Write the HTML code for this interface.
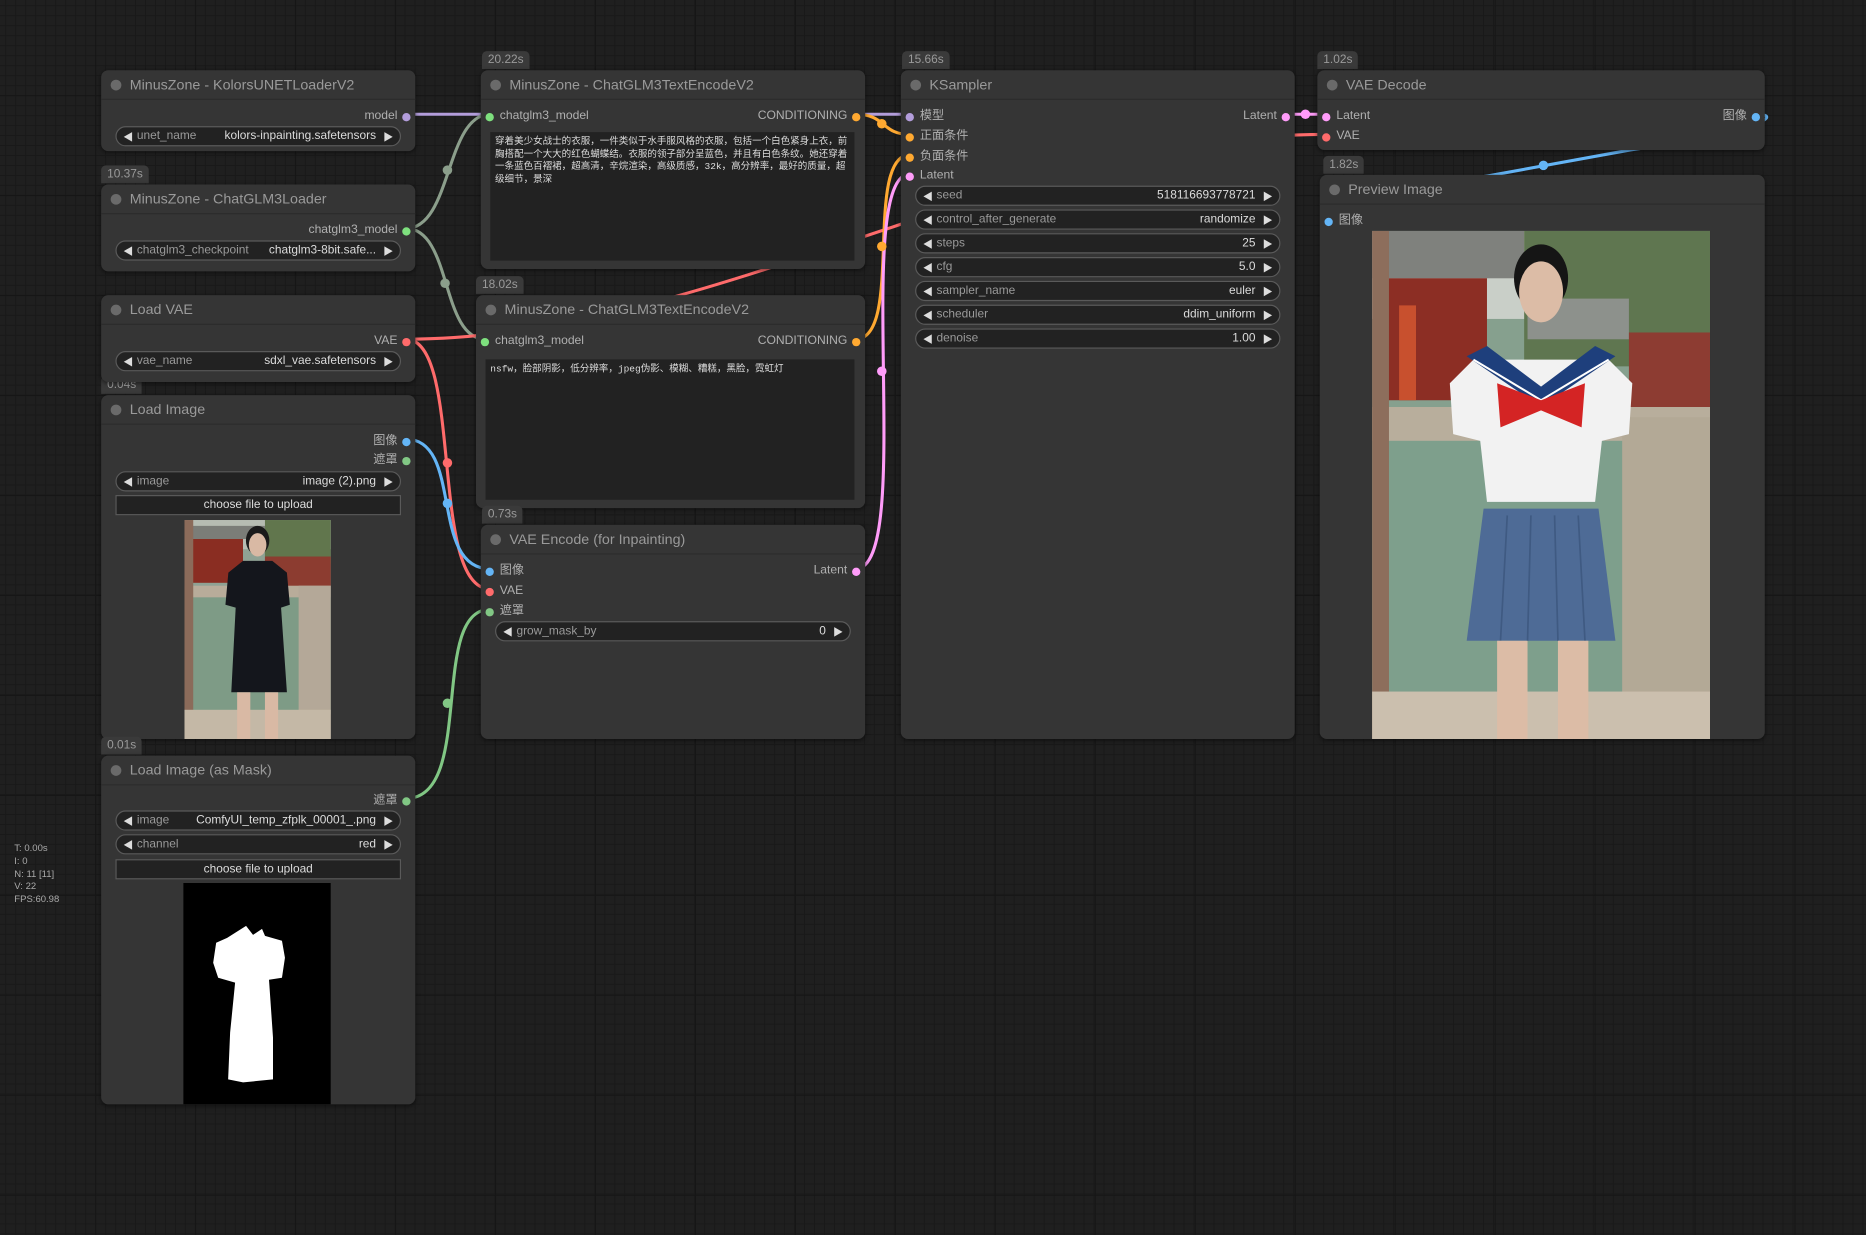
<!DOCTYPE html>
<html><head><meta charset="utf-8">
<style>
*{margin:0;padding:0;box-sizing:border-box}
html,body{width:1866px;height:1235px;overflow:hidden;background:#1f1f1f}
#root{position:absolute;left:0;top:0;width:1568px;height:1038px;transform:scale(1.19);transform-origin:0 0;
font-family:"Liberation Sans","Noto Sans CJK SC",sans-serif;
background-color:#1f1f1f;
background-image:linear-gradient(#161616 1px,transparent 1px),linear-gradient(90deg,#161616 1px,transparent 1px),linear-gradient(#191919 1px,transparent 1px),linear-gradient(90deg,#191919 1px,transparent 1px);
background-size:84px 84px,84px 84px,8.4px 8.4px,8.4px 8.4px;background-position:-4px -4px}
.node{position:absolute;background:#353535;border-radius:6px;box-shadow:0 1px 4px rgba(0,0,0,.5)}
.title{height:25px;border-bottom:1px solid #2c2c2c;color:#9a9a9a;font-size:12px;line-height:25px;padding-left:24px;position:relative}
.title:before{content:"";position:absolute;left:8px;top:8px;width:9px;height:9px;border-radius:50%;background:#6a6a6a}
.badge{position:absolute;background:#3a3a3a;color:#9a9a9a;font-size:10px;height:15px;line-height:15px;padding:0 5px;border-radius:4px 4px 0 0}
.so,.si{position:absolute;font-size:10.2px;color:#b0b0b0;height:14px;line-height:14px;white-space:nowrap}
.so{right:15px}
.si{left:16px}
.so i,.si i{position:absolute;top:4px;width:7px;height:7px;border-radius:50%}
.so i{right:-11px}.si i{left:-12px}
.w{position:absolute;left:12px;right:12px;height:17px;background:#222;border:1px solid #5a5a5a;border-radius:9px;font-size:10px;line-height:15px;color:#dcdcdc}
.w .l{position:absolute;left:17px;color:#9a9a9a}
.w .v{position:absolute;right:20px}
.w:before{content:"";position:absolute;left:6px;top:4px;border-right:7px solid #ddd;border-top:4px solid transparent;border-bottom:4px solid transparent}
.w:after{content:"";position:absolute;right:6px;top:4px;border-left:7px solid #ddd;border-top:4px solid transparent;border-bottom:4px solid transparent}
.btn{position:absolute;left:12px;right:12px;height:17px;background:#222;border:1px solid #5a5a5a;font-size:10px;line-height:15px;color:#ddd;text-align:center}
.ta{position:absolute;background:#222;color:#ddd;font-size:8px;line-height:10.5px;padding:4px 4px;font-family:"Liberation Mono","Noto Sans CJK SC",monospace}
#stats{position:absolute;left:12px;top:708px;font-size:8px;line-height:10.8px;color:#aaa}
svg.links{position:absolute;left:0;top:0}
</style></head><body><div id="root">

<svg class="links" width="1568" height="1038" fill="none" stroke-width="2.6">
<path d="M341 96 L765 96" stroke="#b39ddb"/>
<path d="M341 192 C380 192,374 96,412 96" stroke="#8b9e8b"/>
<path d="M341 192 C380 192,370 285,408 285" stroke="#8b9e8b"/>
<path d="M341 285 C600 285,850 113,1113 113" stroke="#ff6b6b"/>
<path d="M341 285 C390 285,360 495,412 495" stroke="#ff6b6b"/>
<path d="M341 369 C390 369,360 478,412 478" stroke="#64b5f6"/>
<path d="M341 671 C400 671,360 512,412 512" stroke="#81c784"/>
<path d="M719 96 C745 96,740 113,765 113" stroke="#ffa931"/>
<path d="M719 285 C760 285,725 130,765 130" stroke="#ffa931"/>
<path d="M719 478 C770 478,715 146,765 146" stroke="#ff9cf9"/>
<path d="M1080 96 L1113 96" stroke="#ff9cf9"/>
<path d="M1475 96 C1500 96,1480 110,1370 126 L1255 147 C1180 160,1110 170,1117 184" stroke="#64b5f6"/>
<g stroke="none">
<circle cx="376" cy="143" r="4" fill="#8b9e8b"/><circle cx="374" cy="238" r="4" fill="#8b9e8b"/>
<circle cx="376" cy="389" r="4" fill="#ff6b6b"/><circle cx="376" cy="423" r="4" fill="#64b5f6"/>
<circle cx="376" cy="591" r="4" fill="#81c784"/><circle cx="741" cy="104" r="4" fill="#ffa931"/>
<circle cx="741" cy="207" r="4" fill="#ffa931"/><circle cx="741" cy="312" r="4" fill="#ff9cf9"/>
<circle cx="1097" cy="96" r="4" fill="#ff9cf9"/><circle cx="1297" cy="139" r="4" fill="#64b5f6"/>
</g>
</svg>

<div class="node" style="left:85px;top:59px;width:264px;height:68px">
<div class="title">MinusZone - KolorsUNETLoaderV2</div>
<div class="so" style="top:32px">model<i style="background:#b39ddb"></i></div>
<div class="w" style="top:47px"><span class="l">unet_name</span><span class="v">kolors-inpainting.safetensors</span></div>
</div>

<div class="badge" style="left:85px;top:139px">10.37s</div>
<div class="node" style="left:85px;top:155px;width:264px;height:73px">
<div class="title">MinusZone - ChatGLM3Loader</div>
<div class="so" style="top:32px">chatglm3_model<i style="background:#7ee07e"></i></div>
<div class="w" style="top:47px"><span class="l">chatglm3_checkpoint</span><span class="v">chatglm3-8bit.safe...</span></div>
</div>

<div class="badge" style="left:85px;top:316px">0.04s</div>
<div class="node" style="left:85px;top:248px;width:264px;height:73px">
<div class="title">Load VAE</div>
<div class="so" style="top:32px">VAE<i style="background:#ff6b6b"></i></div>
<div class="w" style="top:47px"><span class="l">vae_name</span><span class="v">sdxl_vae.safetensors</span></div>
</div>

<div class="node" style="left:85px;top:332px;width:264px;height:289px">
<div class="title">Load Image</div>
<div class="so" style="top:32px">图像<i style="background:#64b5f6"></i></div>
<div class="so" style="top:48px">遮罩<i style="background:#81c784"></i></div>
<div class="w" style="top:64px"><span class="l">image</span><span class="v">image (2).png</span></div>
<div class="btn" style="top:84px">choose file to upload</div>
<svg style="position:absolute;left:70px;top:105px" width="123" height="184" viewBox="0 0 100 150" preserveAspectRatio="none">
<rect width="100" height="150" fill="#8fa294"/><rect width="100" height="20" fill="#b6bcb2"/>
<rect x="0" y="4" width="55" height="9" fill="#7b7d78"/><rect x="55" y="0" width="45" height="30" fill="#61764d"/>
<rect x="4" y="13" width="36" height="30" fill="#8a2d22"/><rect x="55" y="25" width="45" height="22" fill="#8c3c30"/>
<rect x="0" y="45" width="100" height="8" fill="#b8ac9a"/><rect x="0" y="53" width="100" height="80" fill="#7e9b86"/>
<rect x="78" y="45" width="22" height="105" fill="#b4a898"/><rect x="0" y="0" width="6" height="150" fill="#8b6b5a"/>
<rect x="0" y="130" width="100" height="20" fill="#c4b8a6"/>
<ellipse cx="50" cy="14" rx="8" ry="10" fill="#1a1a1a"/><ellipse cx="50" cy="17" rx="6" ry="8" fill="#d9b9a4"/>
<path d="M40 28 L60 28 L70 36 L72 58 L66 60 L70 118 L32 118 L35 60 L28 58 L30 36Z" fill="#14161c"/>
<rect x="36" y="118" width="9" height="32" fill="#d9b9a4"/><rect x="55" y="118" width="9" height="32" fill="#d9b9a4"/>
</svg>
</div>

<div class="badge" style="left:85px;top:619px">0.01s</div>
<div class="node" style="left:85px;top:635px;width:264px;height:293px">
<div class="title">Load Image (as Mask)</div>
<div class="so" style="top:31px">遮罩<i style="background:#81c784"></i></div>
<div class="w" style="top:46px"><span class="l">image</span><span class="v">ComfyUI_temp_zfplk_00001_.png</span></div>
<div class="w" style="top:66px"><span class="l">channel</span><span class="v">red</span></div>
<div class="btn" style="top:87px">choose file to upload</div>
<svg style="position:absolute;left:69px;top:107px" width="124" height="186" viewBox="0 0 148 222">
<rect width="148" height="222" fill="#000"/>
<path d="M63 43 L70 52 L79 46 L82 53 L99 58 L102 75 L99 95 L86 97 L90 155 L90 197 L60 200 L45 197 L47 150 L52 100 L35 95 L30 80 L33 60 L44 55Z" fill="#fff"/>
</svg>
</div>

<div class="badge" style="left:405px;top:43px">20.22s</div>
<div class="node" style="left:404px;top:59px;width:323px;height:167px">
<div class="title">MinusZone - ChatGLM3TextEncodeV2</div>
<div class="si" style="top:32px"><i style="background:#7ee07e"></i>chatglm3_model</div>
<div class="so" style="top:32px">CONDITIONING<i style="background:#ffa931"></i></div>
<div class="ta" style="left:8px;top:52px;width:306px;height:108px">穿着美少女战士的衣服，一件类似于水手服风格的衣服，包括一个白色紧身上衣，前胸搭配一个大大的红色蝴蝶结。衣服的领子部分呈蓝色，并且有白色条纹。她还穿着一条蓝色百褶裙，超高清，辛烷渲染，高级质感，32k，高分辨率，最好的质量，超级细节，景深</div>
</div>

<div class="badge" style="left:400px;top:232px">18.02s</div>
<div class="node" style="left:400px;top:248px;width:327px;height:179px">
<div class="title">MinusZone - ChatGLM3TextEncodeV2</div>
<div class="si" style="top:32px"><i style="background:#7ee07e"></i>chatglm3_model</div>
<div class="so" style="top:32px">CONDITIONING<i style="background:#ffa931"></i></div>
<div class="ta" style="left:8px;top:54px;width:310px;height:118px">nsfw，脸部阴影，低分辨率，jpeg伪影、模糊、糟糕，黑脸，霓虹灯</div>
</div>

<div class="badge" style="left:405px;top:425px">0.73s</div>
<div class="node" style="left:404px;top:441px;width:323px;height:180px">
<div class="title">VAE Encode (for Inpainting)</div>
<div class="si" style="top:32px"><i style="background:#64b5f6"></i>图像</div>
<div class="si" style="top:49px"><i style="background:#ff6b6b"></i>VAE</div>
<div class="si" style="top:66px"><i style="background:#81c784"></i>遮罩</div>
<div class="so" style="top:32px">Latent<i style="background:#ff9cf9"></i></div>
<div class="w" style="top:81px"><span class="l">grow_mask_by</span><span class="v">0</span></div>
</div>

<div class="badge" style="left:758px;top:43px">15.66s</div>
<div class="node" style="left:757px;top:59px;width:331px;height:562px">
<div class="title">KSampler</div>
<div class="si" style="top:32px"><i style="background:#b39ddb"></i>模型</div>
<div class="si" style="top:49px"><i style="background:#ffa931"></i>正面条件</div>
<div class="si" style="top:66px"><i style="background:#ffa931"></i>负面条件</div>
<div class="si" style="top:82px"><i style="background:#ff9cf9"></i>Latent</div>
<div class="so" style="top:32px">Latent<i style="background:#ff9cf9"></i></div>
<div class="w" style="top:97px"><span class="l">seed</span><span class="v">518116693778721</span></div>
<div class="w" style="top:117px"><span class="l">control_after_generate</span><span class="v">randomize</span></div>
<div class="w" style="top:137px"><span class="l">steps</span><span class="v">25</span></div>
<div class="w" style="top:157px"><span class="l">cfg</span><span class="v">5.0</span></div>
<div class="w" style="top:177px"><span class="l">sampler_name</span><span class="v">euler</span></div>
<div class="w" style="top:197px"><span class="l">scheduler</span><span class="v">ddim_uniform</span></div>
<div class="w" style="top:217px"><span class="l">denoise</span><span class="v">1.00</span></div>
</div>

<div class="badge" style="left:1107px;top:43px">1.02s</div>
<div class="node" style="left:1107px;top:59px;width:376px;height:67px">
<div class="title">VAE Decode</div>
<div class="si" style="top:32px"><i style="background:#ff9cf9"></i>Latent</div>
<div class="si" style="top:49px"><i style="background:#ff6b6b"></i>VAE</div>
<div class="so" style="top:32px">图像<i style="background:#64b5f6"></i></div>
</div>

<div class="badge" style="left:1112px;top:131px">1.82s</div>
<div class="node" style="left:1109px;top:147px;width:374px;height:474px">
<div class="title">Preview Image</div>
<div class="si" style="top:32px"><i style="background:#64b5f6"></i>图像</div>
<svg style="position:absolute;left:44px;top:47px" width="284" height="427" viewBox="0 0 100 150" preserveAspectRatio="none">
<rect width="100" height="150" fill="#86a08e"/><rect width="100" height="26" fill="#c9cfc8"/>
<rect x="0" y="0" width="45" height="14" fill="#7f817d"/><rect x="45" y="0" width="55" height="40" fill="#5f7650"/>
<rect x="46" y="20" width="30" height="12" fill="#8d918c"/>
<rect x="4" y="14" width="30" height="36" fill="#8c2e24"/><rect x="8" y="22" width="5" height="28" fill="#c8502e"/>
<rect x="76" y="30" width="24" height="22" fill="#8d3c32"/>
<rect x="0" y="52" width="100" height="10" fill="#b8ae9c"/><rect x="0" y="62" width="100" height="78" fill="#7e9f8c"/>
<rect x="74" y="55" width="26" height="95" fill="#b3a996"/><rect x="0" y="0" width="5" height="150" fill="#8d6e5c"/>
<rect x="0" y="136" width="100" height="14" fill="#cbbfae"/>
<ellipse cx="50" cy="14" rx="8" ry="10" fill="#151515"/><ellipse cx="50" cy="18" rx="6.5" ry="9" fill="#dcbca6"/>
<path d="M30 38 L70 38 L77 45 L76 60 L68 62 L66 80 L34 80 L32 62 L24 60 L23 45Z" fill="#f2f2f2"/>
<path d="M28 37 L50 52 L72 37 L66 34 L50 46 L34 34Z" fill="#1e3f7c"/>
<path d="M30 38 L50 50 L70 38" stroke="#fff" stroke-width="0.6" fill="none"/>
<path d="M37 45 L50 50 L63 45 L62 58 L50 53 L38 58Z" fill="#d42424"/>
<path d="M33 82 L67 82 L72 121 L28 121Z" fill="#4e6b96"/>
<path d="M40 84 L38 121 M47 84 L46 121 M54 84 L55 121 M61 84 L63 121" stroke="#3f5a82" stroke-width="0.5"/>
<rect x="37" y="121" width="9" height="29" fill="#dcbca6"/><rect x="55" y="121" width="9" height="29" fill="#dcbca6"/>
</svg>
</div>

<div id="stats">T: 0.00s<br>I: 0<br>N: 11 [11]<br>V: 22<br>FPS:60.98</div>
</div></body></html>
